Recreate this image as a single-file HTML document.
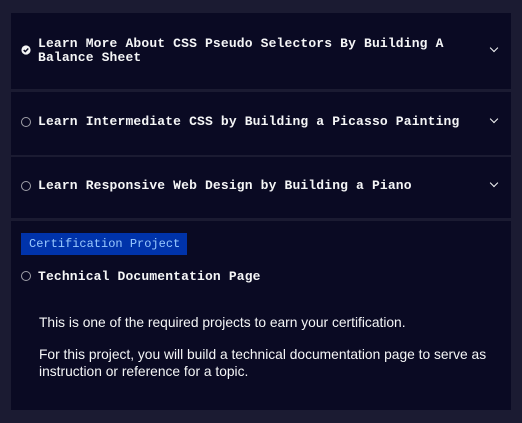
<!DOCTYPE html>
<html><head><style>
body{margin:0;width:522px;height:423px;background:#1b1b32;overflow:hidden;font-family:"Liberation Mono",monospace;color:#f5f6f7}
.p{position:absolute;left:11px;width:500px;background:#0a0a23}
.t{position:absolute;left:38px;font-weight:bold;font-size:13px;line-height:14px;white-space:nowrap;letter-spacing:0.15px}
.ic{position:absolute;left:21px;width:8px;height:8px;border:1px solid #a0a0a8;border-radius:50%}
.ch{position:absolute;left:491px;width:5px;height:5px;border-right:1.5px solid #f5f6f7;border-bottom:1.5px solid #f5f6f7;transform:rotate(45deg)}
</style></head><body>
<div class="p" style="top:13px;height:76px"></div>
<div class="p" style="top:92px;height:63px"></div>
<div class="p" style="top:157px;height:61px"></div>
<div class="p" style="top:221px;height:189px"></div>

<svg style="position:absolute;left:21px;top:45px" width="10" height="10" viewBox="0 0 10 10"><circle cx="5" cy="5" r="4.6" fill="#f5f6f7"/><path d="M2.7 5.1 L4.3 6.6 L7.3 3.5" stroke="#0a0a23" stroke-width="1.5" fill="none"/></svg>
<div class="t" style="top:37px">Learn More About CSS Pseudo Selectors By Building A<br>Balance Sheet</div>
<div class="ch" style="top:45px"></div>

<div class="ic" style="top:117px"></div>
<div class="t" style="top:115px">Learn Intermediate CSS by Building a Picasso Painting</div>
<div class="ch" style="top:116px"></div>

<div class="ic" style="top:181px"></div>
<div class="t" style="top:179px">Learn Responsive Web Design by Building a Piano</div>
<div class="ch" style="top:180px"></div>

<div style="position:absolute;left:21px;top:233px;width:166px;height:22px;background:#0033aa;color:#99c9ff;font-size:12px;line-height:22px;text-indent:8px">Certification Project</div>
<div class="ic" style="top:271px"></div>
<div class="t" style="top:270px">Technical Documentation Page</div>
<div style="position:absolute;left:39px;top:314px;width:450px;font-family:'Liberation Sans',sans-serif;font-size:13.8px;line-height:17px">
<p style="margin:0 0 15px">This is one of the required projects to earn your certification.</p>
<p style="margin:0">For this project, you will build a technical documentation page to serve as instruction or reference for a topic.</p>
</div>
</body></html>
